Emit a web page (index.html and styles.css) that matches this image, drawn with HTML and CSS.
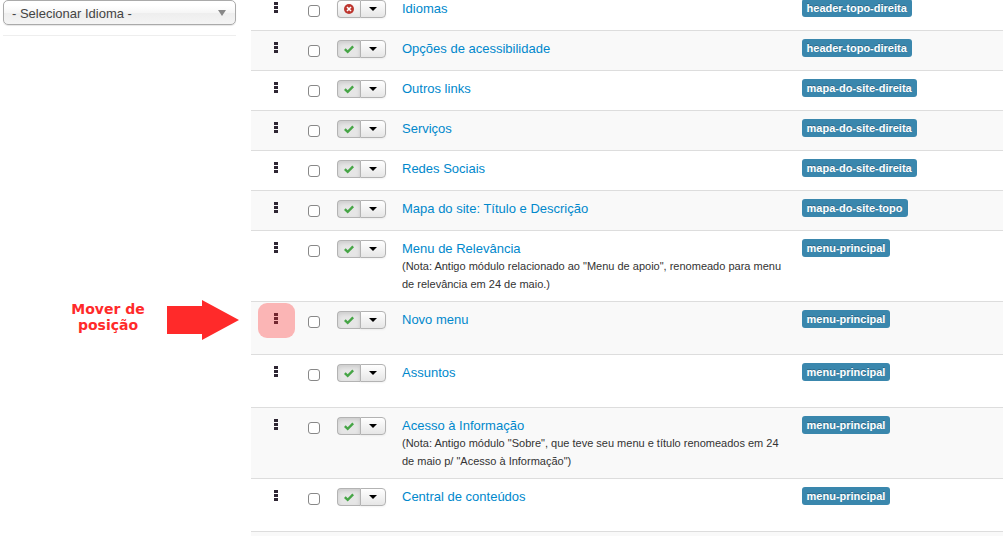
FILE: index.html
```
<!DOCTYPE html>
<html lang="pt-BR">
<head>
<meta charset="utf-8">
<title>Módulos</title>
<link rel="stylesheet" href="styles.css">
</head>
<body>
<svg class="sprite" aria-hidden="true">
  <symbol id="drag" viewBox="0 0 4 11"><path d="M0 0h4v3H0zM0 4h4v3H0zM0 8h4v3H0z" fill="#2e2633"/></symbol>
  <symbol id="check" viewBox="0 0 10 9"><path d="M0 5l1.7-1.7 2 2L8.3.5 10 2.2 3.7 8.6z" fill="#46a546"/></symbol>
  <symbol id="off" viewBox="0 0 10 10"><circle cx="5" cy="5" r="5" fill="#bd362f"/><path d="M3 3l4 4M7 3l-4 4" stroke="#fff" stroke-width="1.6"/></symbol>
  <symbol id="caret" viewBox="0 0 8 4"><path d="M0 0h8L4 4z" fill="#000"/></symbol>
</svg>
<div class="page">
  <aside class="sidebar">
    <select class="filter" aria-label="Selecionar Idioma"><option>- Selecionar Idioma -</option></select>
    <hr class="rule">
  </aside>
  <main class="content">
    <table class="modules">
      <colgroup><col class="c-drag"><col class="c-check"><col class="c-status"><col class="c-title"><col></colgroup>
      <tbody id="rows"></tbody>
    </table>
  </main>
</div>
<script src="modules.js"></script>
</body>
</html>
```

FILE: modules.js
```
const modules = [
  { title: "Idiomas", position: "header-topo-direita", off: true },
  { title: "Opções de acessibilidade", position: "header-topo-direita" },
  { title: "Outros links", position: "mapa-do-site-direita" },
  { title: "Serviços", position: "mapa-do-site-direita" },
  { title: "Redes Sociais", position: "mapa-do-site-direita" },
  { title: "Mapa do site: Título e Descrição", position: "mapa-do-site-topo" },
  { title: "Menu de Relevância", position: "menu-principal", note: "(Nota: Antigo módulo relacionado ao \"Menu de apoio\", renomeado para menu de relevância em 24 de maio.)" },
  { title: "Novo menu", position: "menu-principal", tall: true, marked: true },
  { title: "Assuntos", position: "menu-principal", tall: true },
  { title: "Acesso à Informação", position: "menu-principal", note: "(Nota: Antigo módulo \"Sobre\", que teve seu menu e título renomeados em 24 de maio p/ \"Acesso à Informação\")" },
  { title: "Central de conteúdos", position: "menu-principal", tall: true }
];

const icon = (name) => `<svg class="icon-${name}" aria-hidden="true"><use href="#${name}"/></svg>`;

const callout = `<span class="highlight"></span>
  <span class="callout"><strong class="callout-text">Mover de posição</strong>
  <svg class="arrow" viewBox="0 0 72 40" aria-hidden="true"><path d="M0 6h35V0l37 20-37 20v-6H0z" fill="#ff2a2a"/></svg></span>`;

document.getElementById("rows").innerHTML = modules.map((m) => `
  <tr class="${m.tall ? "tall" : ""}">
    <td class="drag"><div class="handle">${icon("drag")}${m.marked ? callout : ""}</div></td>
    <td class="select"><input class="box" type="checkbox" aria-label="Selecionar ${m.title}"></td>
    <td><div class="group">
      <button class="btn ${m.off ? "" : "active"}" type="button" aria-label="Estado">${icon(m.off ? "off" : "check")}</button>
      <button class="btn" type="button" aria-label="Opções">${icon("caret")}</button>
    </div></td>
    <td class="name"><a class="title" href="#">${m.title}</a>${m.note ? `<div class="note">${m.note}</div>` : ""}</td>
    <td class="position"><span class="label">${m.position}</span></td>
  </tr>`).join("");
```

FILE: styles.css
```
body {
  margin: 0;
  overflow: hidden;
  background: #fff;
  color: #333;
  font: 13px/18px "Liberation Sans", Arial, sans-serif;
}
.sprite {
  position: absolute;
  width: 0;
  height: 0;
}
.page {
  display: flex;
  min-height: 100vh;
}
.sidebar {
  position: relative;
  flex: 0 0 233px;
  padding: 0 15px 0 3px;
}
.filter {
  display: block;
  width: 100%;
  height: 25px;
  padding: 2px 8px 0;
  border: 1px solid #aaa;
  border-radius: 5px;
  appearance: none;
  background: linear-gradient(#fff 20%, #f6f6f6 50%, #eee 52%, #f4f4f4);
  box-shadow: 0 1px 1px rgba(0, 0, 0, .1);
  color: #444;
  font: inherit;
}
.sidebar::after {
  content: "";
  position: absolute;
  top: 10px;
  right: 25px;
  border: 4px solid transparent;
  border-top: 6px solid #888;
  border-bottom: 0;
  pointer-events: none;
}
.rule {
  margin: 10px 0;
  border: 0;
  border-top: 1px solid #eee;
}
.content {
  flex: 1;
  min-width: 0;
  background: #f9f9f9;
}
.modules {
  width: 100%;
  margin-top: -10px;
  border-collapse: separate;
  border-spacing: 0;
  border-bottom: 1px solid #ddd;
  table-layout: fixed;
}
.c-drag { width: 49px; }
.c-check { width: 29px; }
.c-status { width: 65px; }
.c-title { width: 53%; }
.modules td {
  height: 23px;
  padding: 8px;
  border-top: 1px solid #ddd;
  background: #fff;
  vertical-align: top;
}
.modules .tall td { height: 36px; }
.modules tr:nth-child(even) td { background: #f9f9f9; }
.modules .name { padding: 9px 8px 7px; }
.modules .position { padding-left: 9px; }
.modules .select { padding: 14px 0 0 8px; }
.handle {
  position: relative;
  display: flex;
  justify-content: center;
  padding-top: 3px;
}
.icon-drag { width: 4px; height: 11px; }
.icon-check { width: 10px; height: 9px; }
.icon-off { width: 10px; height: 10px; }
.icon-caret { width: 8px; height: 4px; }
.box {
  display: block;
  width: 12px;
  height: 12px;
  margin: 0;
  border: 1px solid #888;
  border-radius: 3px;
  appearance: none;
  background: #fff;
}
.group {
  display: flex;
  width: 49px;
  margin-top: 1px;
}
.btn {
  display: flex;
  flex: 1;
  align-items: center;
  justify-content: center;
  height: 18px;
  padding: 0;
  border: 1px solid #b3b3b3;
  background: linear-gradient(#fff, #e6e6e6);
  box-shadow: 0 1px 2px rgba(0, 0, 0, .05);
}
.btn:first-child {
  flex: 0 0 23px;
  border-right: 0;
  border-radius: 4px 0 0 4px;
}
.btn:last-child { border-radius: 0 4px 4px 0; }
.btn.active {
  background: #e6e6e6;
  box-shadow: inset 0 2px 4px rgba(0, 0, 0, .12);
}
.title {
  color: #08c;
  text-decoration: none;
}
.note {
  margin-top: -1px;
  padding-bottom: 1px;
  font-size: 11px;
}
.label {
  display: inline-block;
  padding: 2px 5px;
  border-radius: 3px;
  background: #3a87ad;
  color: #fff;
  font-size: 11px;
  font-weight: bold;
  line-height: 14px;
  text-shadow: 0 -1px 0 rgba(0, 0, 0, .25);
}
.highlight {
  position: absolute;
  top: -7px;
  left: -1px;
  width: 37px;
  height: 35px;
  border-radius: 9px;
  background: rgba(255, 42, 42, .33);
}
.callout {
  position: absolute;
  top: -10px;
  right: 100%;
  display: flex;
  align-items: flex-start;
  gap: 22px;
  margin-right: 20px;
}
.callout-text {
  width: 74px;
  padding-top: 1px;
  color: #ff2a2a;
  font: bold 14px/16px "DejaVu Sans", sans-serif;
  text-align: center;
}
.arrow {
  flex: none;
  width: 72px;
  height: 40px;
}
```
